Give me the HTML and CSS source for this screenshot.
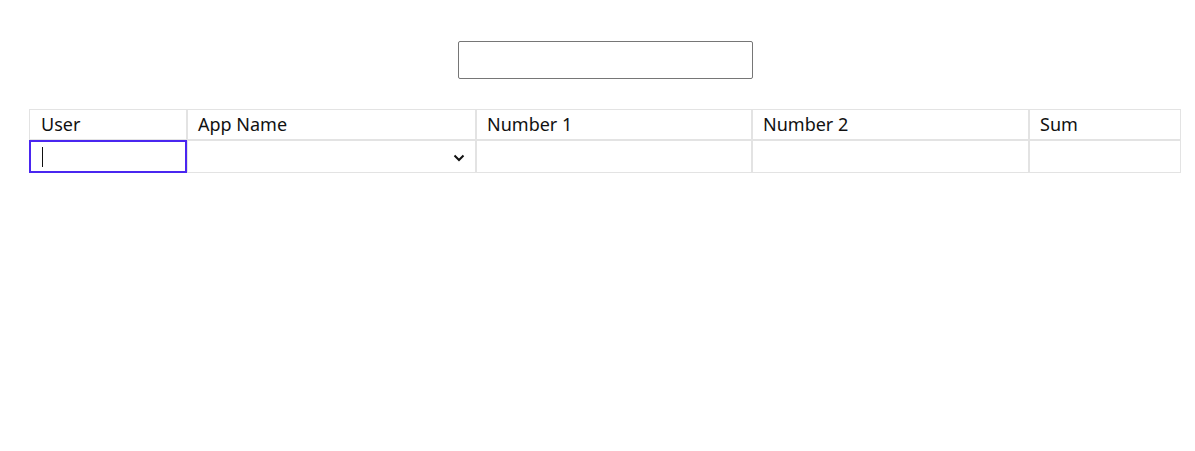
FILE: index.html
```html
<!DOCTYPE html>
<html>
<head>
<meta charset="utf-8">
<link rel="stylesheet" href="styles.css">
</head>
<body>
<div class="page">
  <div class="search-row">
    <input class="search" type="text">
  </div>
  <table class="grid">
    <colgroup>
      <col class="c-user">
      <col class="c-app">
      <col class="c-n1">
      <col class="c-n2">
      <col class="c-sum">
    </colgroup>
    <thead>
      <tr>
        <th class="first">User</th>
        <th>App Name</th>
        <th>Number 1</th>
        <th>Number 2</th>
        <th>Sum</th>
      </tr>
    </thead>
    <tbody>
      <tr>
        <td class="focus-cell"><span class="caret"></span></td>
        <td class="select-cell">
          <svg class="chev" width="12" height="8" viewBox="0 0 12 8"><path d="M1.5 1.5 L6 6 L10.5 1.5" fill="none" stroke="#111" stroke-width="2"/></svg>
        </td>
        <td></td>
        <td></td>
        <td></td>
      </tr>
    </tbody>
  </table>
</div>
</body>
</html>
```
FILE: styles.css
```css
html, body {
  margin: 0;
  padding: 0;
  background: #fff;
}
body {
  font-family: "Noto Sans", "Open Sans", sans-serif;
  color: #111;
}
.page {
  padding: 41px 14px 0 29px;
}
.search-row {
  display: flex;
  justify-content: center;
  margin-bottom: 30px;
}
.search {
  box-sizing: border-box;
  width: 295px;
  height: 38px;
  border: 1px solid #767676;
  border-radius: 2px;
  margin: 0;
  padding: 0 8px;
  font: inherit;
  outline: none;
}
.grid {
  width: 1152px;
  table-layout: fixed;
  border-collapse: separate;
  border-spacing: 0;
}
.c-user { width: 158px; }
.c-app { width: 289px; }
.c-n1 { width: 276px; }
.c-n2 { width: 277px; }
.c-sum { width: 152px; }
.grid th, .grid td {
  border: 1px solid #e3e3e3;
  padding: 0 0 0 10px;
  box-sizing: border-box;
}
.grid th.first {
  padding-left: 11px;
}
.grid th {
  font-weight: 400;
  font-size: 18px;
  text-align: left;
  line-height: 26px;
  padding-bottom: 2px;
  height: 31px;
}
.grid td {
  height: 33px;
}
.grid td.focus-cell {
  border: 2px solid #4a26f0;
  padding-left: 11px;
}
.caret {
  display: block;
  width: 1px;
  height: 20px;
  background: #111;
}
.select-cell {
  text-align: right;
}
.chev {
  display: inline-block;
  vertical-align: middle;
  margin-right: 10px;
}
```
